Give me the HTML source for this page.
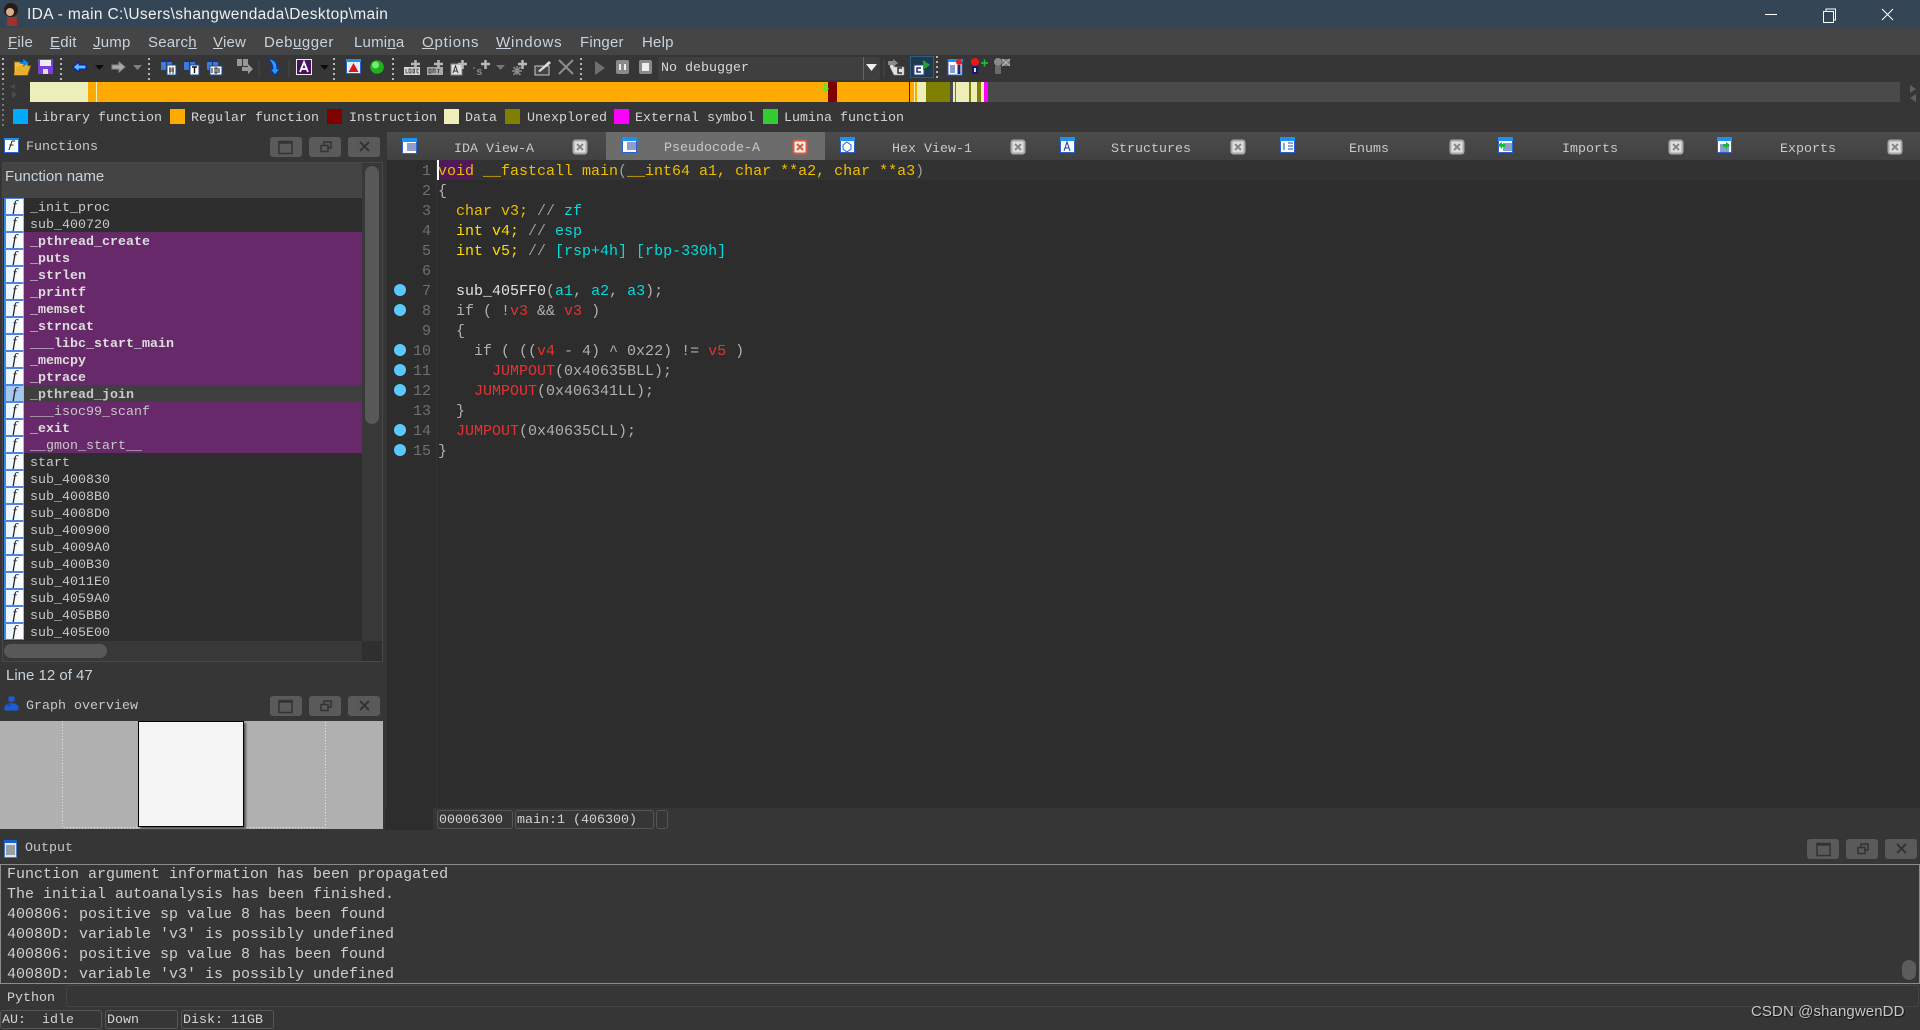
<!DOCTYPE html>
<html><head><meta charset="utf-8"><title>IDA - main</title>
<style>
html,body{margin:0;padding:0;width:1920px;height:1030px;overflow:hidden;background:#363636}
*{box-sizing:border-box}
.a{position:absolute}
.s{font-family:"Liberation Sans",sans-serif}
.m{font-family:"Liberation Mono",monospace;font-size:13.33px;white-space:pre;color:#d4d4d4}
.menu{position:absolute;top:30px;height:25px;font:15px/26px "Liberation Sans",sans-serif;color:#c9d3dc;white-space:pre;letter-spacing:.2px}
.lg{position:absolute;top:109px;width:15px;height:15px}
.lt{position:absolute;top:110px;line-height:17px}
.tabt{position:absolute;top:141px;line-height:18px;color:#c8c8c8}
.btn{position:absolute;width:32px;height:20px;background:#5a5a5a;border-radius:3px}
.row{position:absolute;left:4px;width:358px;height:17px;line-height:17px}
.fi{position:absolute;left:0;top:0;width:20px;height:17px;background:linear-gradient(90deg,#eaf5ff,#fff);border:1px solid #4d86e0;border-right:1px solid #9cc0ee;border-left:2px solid #3c86e8;color:#222;font:italic 16px/15px "Liberation Serif",serif;text-align:center;overflow:hidden}
.rt{position:absolute;left:26px;top:3px;font-family:"Liberation Mono",monospace;font-size:13.33px;white-space:pre;color:#c8c8c8;line-height:15px}
.b .rt{font-weight:bold;color:#dedede}
.pu{background:#67296a}
.c{position:absolute;left:438px;margin-top:1px;font:15px/20px "Liberation Mono",monospace;white-space:pre;color:#b0b0b0}
.n{position:absolute;left:395px;margin-top:1px;width:36px;text-align:right;font:15px/20px "Liberation Mono",monospace;color:#707070}
.k{color:#efbe00}.y{color:#ffdc00}.g{color:#9a9a9a}.t{color:#00dcdc}.r{color:#e63232}.w{color:#e2e2e2}
.o{position:absolute;left:7px;margin-top:1px;font:15px/20px "Liberation Mono",monospace;white-space:pre;color:#cfcfcf}
.box{position:absolute;border:1px solid #555;border-radius:3px;height:19px;top:810px;line-height:19px;padding-left:1px}
</style></head><body>

<!-- title -->
<div class="a" style="left:0;top:0;width:1920px;height:28px;background:#344655"></div>
<div class="a s" style="left:27px;top:4px;font-size:15.5px;line-height:21px;color:#f0f0f0;white-space:pre;letter-spacing:.35px">IDA - main C:\Users\shangwendada\Desktop\main</div>

<!-- menu -->
<div class="a" style="left:0;top:28px;width:1920px;height:27px;background:#454545"></div>
<div class="menu" style="left:8px"><u>F</u>ile</div>
<div class="menu" style="left:50px"><u>E</u>dit</div>
<div class="menu" style="left:93px"><u>J</u>ump</div>
<div class="menu" style="left:148px">Searc<u>h</u></div>
<div class="menu" style="left:213px"><u>V</u>iew</div>
<div class="menu" style="left:264px;letter-spacing:.5px">Deb<u>u</u>gger</div>
<div class="menu" style="left:354px">Lumi<u>n</u>a</div>
<div class="menu" style="left:422px;letter-spacing:.8px"><u>O</u>ptions</div>
<div class="menu" style="left:496px;letter-spacing:.8px"><u>W</u>indows</div>
<div class="menu" style="left:580px">Finger</div>
<div class="menu" style="left:642px">Help</div>

<!-- combobox -->
<div class="a" style="left:658px;top:57px;width:222px;height:23px;background:#3f3f3f;border-radius:3px"></div>
<div class="a" style="left:863px;top:57px;width:1px;height:23px;background:#666"></div>
<div class="a m" style="left:661px;top:59px;line-height:19px;color:#d8d8d8">No debugger</div>

<!-- navbar -->
<div class="a" style="left:30px;top:82px;width:1870px;height:20px;background:#4a4a4a"></div>
<div class="a" style="left:30px;top:82px;width:57px;height:20px;background:#eeeebb"></div>
<div class="a" style="left:87px;top:82px;width:901px;height:20px;background:#ffaa00"></div>
<div class="a" style="left:87px;top:82px;width:1px;height:20px;background:#eeeebb"></div>
<div class="a" style="left:96px;top:82px;width:1px;height:20px;background:#eeeebb"></div>
<div class="a" style="left:828px;top:82px;width:9px;height:20px;background:#800000"></div>
<div class="a" style="left:909px;top:82px;width:1px;height:20px;background:#800000"></div>
<div class="a" style="left:914px;top:82px;width:1px;height:20px;background:#eeeebb"></div>
<div class="a" style="left:917px;top:82px;width:9px;height:20px;background:#eeeebb"></div>
<div class="a" style="left:926px;top:82px;width:24px;height:20px;background:#808000"></div>
<div class="a" style="left:950px;top:82px;width:3px;height:20px;background:#4a4a4a"></div>
<div class="a" style="left:953px;top:82px;width:2px;height:20px;background:#eeeebb"></div>
<div class="a" style="left:955px;top:82px;width:1px;height:20px;background:#808000"></div>
<div class="a" style="left:956px;top:82px;width:13px;height:20px;background:#eeeebb"></div>
<div class="a" style="left:969px;top:82px;width:2px;height:20px;background:#808000"></div>
<div class="a" style="left:971px;top:82px;width:6px;height:20px;background:#eeeebb"></div>
<div class="a" style="left:977px;top:82px;width:4px;height:20px;background:#808000"></div>
<div class="a" style="left:981px;top:82px;width:3px;height:20px;background:#eeeebb"></div>
<div class="a" style="left:984px;top:82px;width:4px;height:20px;background:#ff00ff"></div>

<!-- legend -->
<div class="lg" style="left:13px;background:#00aaff"></div><div class="lt m" style="left:34px">Library function</div>
<div class="lg" style="left:170px;background:#ffaa00"></div><div class="lt m" style="left:191px">Regular function</div>
<div class="lg" style="left:327px;background:#800000"></div><div class="lt m" style="left:349px">Instruction</div>
<div class="lg" style="left:444px;background:#eeeebb"></div><div class="lt m" style="left:465px">Data</div>
<div class="lg" style="left:505px;background:#808000"></div><div class="lt m" style="left:527px">Unexplored</div>
<div class="lg" style="left:614px;background:#ff00ff"></div><div class="lt m" style="left:635px">External symbol</div>
<div class="lg" style="left:763px;background:#33cc33"></div><div class="lt m" style="left:784px">Lumina function</div>

<!-- tabs -->
<div class="a" style="left:387px;top:132px;width:1533px;height:28px;background:linear-gradient(#4c4c4c,#414141)"></div>
<div class="a" style="left:606px;top:132px;width:219px;height:28px;background:#6c6c6c"></div>
<div class="tabt m" style="left:454px">IDA View-A</div>
<div class="tabt m" style="left:664px;top:140px">Pseudocode-A</div>
<div class="tabt m" style="left:892px">Hex View-1</div>
<div class="tabt m" style="left:1111px">Structures</div>
<div class="tabt m" style="left:1349px">Enums</div>
<div class="tabt m" style="left:1562px">Imports</div>
<div class="tabt m" style="left:1780px">Exports</div>

<!-- editor -->
<div class="a" style="left:387px;top:160px;width:1533px;height:648px;background:#2d2d2d"></div>
<div class="a" style="left:385px;top:808px;width:48px;height:22px;background:#2d2d2d"></div>
<div class="a" style="left:437px;top:160px;width:1483px;height:20px;background:#323232"></div>
<div class="a" style="left:436px;top:160px;width:1px;height:670px;background:#343434"></div>
<div class="a" style="left:438px;top:160px;width:35px;height:20px;background:#4f1a55"></div>
<div class="a" style="left:437px;top:160px;width:2px;height:20px;background:#fff"></div>

<div class="n" style="top:161px">1</div><div class="n" style="top:181px">2</div><div class="n" style="top:201px">3</div><div class="n" style="top:221px">4</div><div class="n" style="top:241px">5</div><div class="n" style="top:261px">6</div><div class="n" style="top:281px">7</div><div class="n" style="top:301px">8</div><div class="n" style="top:321px">9</div><div class="n" style="top:341px">10</div><div class="n" style="top:361px">11</div><div class="n" style="top:381px">12</div><div class="n" style="top:401px">13</div><div class="n" style="top:421px">14</div><div class="n" style="top:441px">15</div>

<div class="c" style="top:161px"><span class="k">void __fastcall main</span><span style="color:#8aa">(</span><span class="k">__int64 a1, char **a2, char **a3</span><span class="g">)</span></div>
<div class="c" style="top:181px">{</div>
<div class="c" style="top:201px">  <span class="k">char v3;</span><span class="g"> // </span><span class="t">zf</span></div>
<div class="c" style="top:221px">  <span class="y">int v4;</span><span class="g"> // </span><span class="t">esp</span></div>
<div class="c" style="top:241px">  <span class="y">int v5;</span><span class="g"> // </span><span class="t">[rsp+4h] [rbp-330h]</span></div>
<div class="c" style="top:281px">  <span class="w">sub_405FF0</span>(<span class="t">a1</span>, <span class="t">a2</span>, <span class="t">a3</span>);</div>
<div class="c" style="top:301px">  if ( !<span class="r">v3</span> &amp;&amp; <span class="r">v3</span> )</div>
<div class="c" style="top:321px">  {</div>
<div class="c" style="top:341px">    if ( ((<span class="r">v4</span> - 4) ^ 0x22) != <span class="r">v5</span> )</div>
<div class="c" style="top:361px">      <span class="r">JUMPOUT</span>(0x40635BLL);</div>
<div class="c" style="top:381px">    <span class="r">JUMPOUT</span>(0x406341LL);</div>
<div class="c" style="top:401px">  }</div>
<div class="c" style="top:421px">  <span class="r">JUMPOUT</span>(0x40635CLL);</div>
<div class="c" style="top:441px">}</div>

<!-- editor status -->
<div class="box m" style="left:437px;width:76px">00006300</div>
<div class="box m" style="left:515px;width:139px">main:1 (406300)</div>
<div class="box m" style="left:656px;width:12px"></div>

<!-- functions panel -->
<div class="a m" style="left:26px;top:139px;line-height:18px;color:#c8c8c8">Functions</div>
<div class="a" style="left:2px;top:162px;width:381px;height:500px;border:1px solid #484848;background:#383838"></div>
<div class="a" style="left:3px;top:163px;width:359px;height:35px;background:#444"></div>
<div class="a s" style="left:5px;top:167px;font-size:15px;line-height:20px;color:#c9d3dc">Function name</div>
<div class="a" style="left:3px;top:198px;width:359px;height:443px;background:#2d2d2d"></div>
<div class="a" style="left:365px;top:166px;width:14px;height:258px;background:#585858;border-radius:7px"></div>
<div class="a" style="left:362px;top:641px;width:20px;height:20px;background:#2f2f2f"></div>
<div class="a" style="left:4px;top:644px;width:103px;height:14px;background:#585858;border-radius:7px"></div>

<div class="row" style="top:198px"><div class="fi">f</div><div class="rt">_init_proc</div></div>
<div class="row" style="top:215px"><div class="fi">f</div><div class="rt">sub_400720</div></div>
<div class="row b pu" style="top:232px"><div class="fi">f</div><div class="rt">_pthread_create</div></div>
<div class="row b pu" style="top:249px"><div class="fi">f</div><div class="rt">_puts</div></div>
<div class="row b pu" style="top:266px"><div class="fi">f</div><div class="rt">_strlen</div></div>
<div class="row b pu" style="top:283px"><div class="fi">f</div><div class="rt">_printf</div></div>
<div class="row b pu" style="top:300px"><div class="fi">f</div><div class="rt">_memset</div></div>
<div class="row b pu" style="top:317px"><div class="fi">f</div><div class="rt">_strncat</div></div>
<div class="row b pu" style="top:334px"><div class="fi">f</div><div class="rt">___libc_start_main</div></div>
<div class="row b pu" style="top:351px"><div class="fi">f</div><div class="rt">_memcpy</div></div>
<div class="row b pu" style="top:368px"><div class="fi">f</div><div class="rt">_ptrace</div></div>
<div class="row" style="top:385px;background:#3f3f3f"><div class="fi" style="background:#a4c8ee">f</div><div class="rt" style="font-weight:bold">_pthread_join</div></div>
<div class="row pu" style="top:402px"><div class="fi">f</div><div class="rt">___isoc99_scanf</div></div>
<div class="row b pu" style="top:419px"><div class="fi">f</div><div class="rt">_exit</div></div>
<div class="row pu" style="top:436px"><div class="fi">f</div><div class="rt">__gmon_start__</div></div>
<div class="row" style="top:453px"><div class="fi">f</div><div class="rt">start</div></div>
<div class="row" style="top:470px"><div class="fi">f</div><div class="rt">sub_400830</div></div>
<div class="row" style="top:487px"><div class="fi">f</div><div class="rt">sub_4008B0</div></div>
<div class="row" style="top:504px"><div class="fi">f</div><div class="rt">sub_4008D0</div></div>
<div class="row" style="top:521px"><div class="fi">f</div><div class="rt">sub_400900</div></div>
<div class="row" style="top:538px"><div class="fi">f</div><div class="rt">sub_4009A0</div></div>
<div class="row" style="top:555px"><div class="fi">f</div><div class="rt">sub_400B30</div></div>
<div class="row" style="top:572px"><div class="fi">f</div><div class="rt">sub_4011E0</div></div>
<div class="row" style="top:589px"><div class="fi">f</div><div class="rt">sub_4059A0</div></div>
<div class="row" style="top:606px"><div class="fi">f</div><div class="rt">sub_405BB0</div></div>
<div class="row" style="top:623px"><div class="fi">f</div><div class="rt">sub_405E00</div></div>

<div class="a s" style="left:6px;top:666px;font-size:15px;line-height:20px;color:#c9d3dc">Line 12 of 47</div>
<div class="a m" style="left:26px;top:698px;line-height:18px;color:#c8c8c8">Graph overview</div>

<!-- overview -->
<div class="a" style="left:0;top:721px;width:383px;height:108px;background:#b0b0b0"></div>
<svg class="a" style="left:0;top:721px" width="383" height="108" fill="none"><path d="M62.500 0V106.500H325.500V0" stroke="#e6e6e6" stroke-dasharray="1 2"/></svg>
<div class="a" style="left:138px;top:721px;width:106px;height:106px;background:#f5f5f5;border:1px solid #000;box-shadow:2px 2px 2px #555"></div>

<!-- panel buttons -->
<div class="btn" style="left:270px;top:137px"></div><div class="btn" style="left:309px;top:137px"></div><div class="btn" style="left:348px;top:137px"></div>
<div class="btn" style="left:270px;top:696px"></div><div class="btn" style="left:309px;top:696px"></div><div class="btn" style="left:348px;top:696px"></div>
<div class="btn" style="left:1807px;top:839px"></div><div class="btn" style="left:1846px;top:839px"></div><div class="btn" style="left:1885px;top:839px"></div>

<!-- output -->
<div class="a m" style="left:25px;top:840px;line-height:18px;color:#c8c8c8">Output</div>
<div class="a" style="left:0;top:864px;width:1920px;height:120px;border:1px solid #8a8a90;background:#363636"></div>
<div class="o" style="top:864px">Function argument information has been propagated</div>
<div class="o" style="top:884px">The initial autoanalysis has been finished.</div>
<div class="o" style="top:904px">400806: positive sp value 8 has been found</div>
<div class="o" style="top:924px">40080D: variable 'v3' is possibly undefined</div>
<div class="o" style="top:944px">400806: positive sp value 8 has been found</div>
<div class="o" style="top:964px">40080D: variable 'v3' is possibly undefined</div>
<div class="a" style="left:1902px;top:960px;width:14px;height:20px;background:#5c5c5c;border-radius:7px"></div>

<!-- python -->
<div class="a m" style="left:7px;top:990px;line-height:18px">Python</div>
<div class="a" style="left:66px;top:985px;width:1853px;height:22px;border:1px solid #444;border-radius:3px"></div>

<!-- status -->
<div class="box m" style="left:0;top:1010px;width:102px;height:19px">AU:  idle</div>
<div class="box m" style="left:105px;top:1010px;width:73px;height:19px">Down</div>
<div class="box m" style="left:181px;top:1010px;width:93px;height:19px">Disk: 11GB</div>
<div class="a s" style="left:1751px;top:1002px;font-size:15px;line-height:19px;color:#c8c8c8;text-shadow:1px 1px 1px #111;letter-spacing:.1px">CSDN @shangwenDD</div>

<!-- icon overlay -->
<svg class="a" style="left:0;top:0" width="1920" height="1030" viewBox="0 0 1920 1030" fill="none">
<defs>
<g id="win"><rect x=".5" y=".5" width="14" height="15" fill="#fff" stroke="#2a62d0"/><rect x="0" y="0" width="15" height="4" fill="#1e90f0"/></g>
<g id="lines"><path d="M5 6h9M5 8h9M5 10h9M5 12h9" stroke="#1c3d98"/></g>
<g id="bino"><rect x="0" y="3" width="5" height="8" rx="1" fill="#3c7ce0"/><rect x="6" y="3" width="5" height="8" rx="1" fill="#3c7ce0"/><rect x="1" y="0" width="3" height="3" fill="#162f80"/><rect x="7" y="0" width="3" height="3" fill="#162f80"/></g>
<g id="plus"><path d="M0 4h9M4.500 0v9" stroke="#b8b8b8" stroke-width="2.500"/></g>
</defs>

<!-- title logo -->
<circle cx="11" cy="10" r="7" fill="#2a1a14"/><circle cx="10" cy="12" r="4" fill="#d8b090"/><rect x="7" y="17" width="10" height="9" fill="#a0302a"/>
<!-- window buttons -->
<path d="M1765 14.500h12" stroke="#fff"/>
<rect x="1823.500" y="11.500" width="10" height="11" stroke="#fff"/><path d="M1826 11.500v-2.500h9.500v11h-2" stroke="#fff"/>
<path d="M1882 9l11 11M1893 9l-11 11" stroke="#fff"/>

<!-- grips -->
<g stroke="#b4b4b4" stroke-width="2" stroke-dasharray="2 3">
<path d="M3 58v22M61 58v22M149 58v22M334 58v22M393 58v22M581 58v22M937 56v22"/>
</g>
<path d="M3 83v20M3 104v22" stroke="#777" stroke-width="2" stroke-dasharray="2 3"/>
<path d="M259 60v18M289 60v18M884 60v18" stroke="#484848"/>

<!-- folder -->
<path d="M14.500 62v13h13l3-9h-3v-3h-7l-1-1z" fill="#f1c24a" stroke="#9a7618"/><path d="M17 66h13l-3 9H14z" fill="#e8b030"/><path d="M20 63h6M23 60l4 3-4 3" stroke="#0a8cf0" stroke-width="2"/>
<!-- save -->
<rect x="38" y="59" width="15" height="15" fill="#7a3fd8"/><rect x="40" y="60" width="11" height="6" fill="#eee"/><rect x="43" y="69" width="5" height="5" fill="#dedede"/>
<!-- back / fwd -->
<path d="M73 67l6-5v3h7v4h-7v3z" fill="#58c0ff" stroke="#0018c8"/>
<path d="M95 65h9l-4.500 5z" fill="#0c0c0c"/>
<path d="M125 67l-6-5v3h-7v4h7v3z" fill="#aaa" stroke="#888"/>
<path d="M133 65h9l-4.500 5z" fill="#808080"/>
<!-- binoculars -->
<use href="#bino" x="161" y="59"/><rect x="167" y="65" width="9" height="10" fill="#fff" stroke="#1c4a90"/><path d="M169 69h5M169 71h5M170 67v7M173 67v7" stroke="#111" stroke-width=".8"/>
<use href="#bino" x="184" y="59"/><rect x="190" y="65" width="9" height="10" fill="#fff" stroke="#1c4a90"/><path d="M192 67h5M194.500 67v6" stroke="#111" stroke-width="1.400"/>
<use href="#bino" x="207" y="59"/><rect x="210" y="66" width="12" height="9" fill="#fff" stroke="#1c4a90"/><path d="M212 68v5M215 68h2v5h-2zM219 68v5" stroke="#111"/>
<!-- search next gray -->
<rect x="237" y="59" width="5" height="7" fill="#989898"/><rect x="243" y="59" width="5" height="7" fill="#989898"/><path d="M242 67h6v-3l5 5-5 5v-3h-6z" fill="#9a9a9a"/>
<!-- blue down arrow -->
<path d="M268 59c8 0 9 5 9 10h3l-5 6-5-6h3c0-4-1-7-5-10z" fill="#2a9cf0" stroke="#0830b8"/>
<!-- A box -->
<rect x="296.500" y="59.500" width="15" height="15" fill="#4a1060" stroke="#eee"/><path d="M300 72l4-10 4 10M301.500 69h5" stroke="#fff" stroke-width="1.800"/>
<path d="M320 65h9l-4.500 5z" fill="#0c0c0c"/>
<!-- warn -->
<rect x="346.500" y="59.500" width="14" height="14" fill="#e8f0fa" stroke="#2a62d0"/><rect x="346" y="59" width="15" height="3" fill="#1e90f0"/><path d="M353.500 63l5 9h-10z" fill="#d81818"/>
<!-- green ball -->
<circle cx="377" cy="67" r="6.800" fill="#22b022"/><circle cx="375.500" cy="65" r="3.500" fill="#70f070"/>
<!-- code/data -->
<rect x="404" y="67" width="16" height="8" fill="#d8d8d8"/><path d="M406 69v4h2M409 69h2v4h-2zM413 69v4h1.500v-4zM417 69h2M417 73h2M417 69v4" stroke="#333" stroke-width=".8"/><use href="#plus" x="411" y="60"/>
<rect x="427" y="67" width="16" height="8" fill="#a8a8a8"/><path d="M429 69v4h2v-4zM433 73v-4h2v4M437 69h3M438.500 69v4" stroke="#333" stroke-width=".8"/><use href="#plus" x="434" y="60"/>
<rect x="451" y="64" width="11" height="11" fill="#e0e0e0" stroke="#888"/><path d="M453 73l2.500-7 2.500 7M454 71h3" stroke="#333"/><use href="#plus" x="458" y="60"/>
<path d="M474 67v2M486 67v2" stroke="#888"/><text x="476" y="75" font-family="Liberation Mono" font-size="11" font-weight="bold" fill="#888">s</text><use href="#plus" x="481" y="60"/>
<path d="M496 65h9l-4.500 5z" fill="#777"/>
<path d="M512 71h10M517 66v9M513.500 67l7 8M520.500 67l-7 8" stroke="#8c8c8c" stroke-width="1.500"/><use href="#plus" x="518" y="60"/>
<path d="M535 66h14v9h-14z" fill="#444" stroke="#cacaca"/><path d="M538 71l11-10 2 2-11 9z" fill="#ddd"/>
<path d="M559 60l14 14M573 60l-14 14" stroke="#8e8e8e" stroke-width="2"/>
<!-- debug -->
<path d="M595 61l10 7-10 7z" fill="#707070"/>
<rect x="616" y="60" width="13" height="14" rx="2" fill="#8a8a8a"/><path d="M620 64v6M625 64v6" stroke="#eee" stroke-width="2"/>
<rect x="639" y="60" width="13" height="14" rx="2" fill="#8a8a8a"/><rect x="642" y="63" width="7" height="8" fill="#eee"/>
<path d="M866 64h11l-5.500 7z" fill="#eee"/>
<!-- after combobox -->
<path d="M890 62l5 5 9-0v8h-10l-4-8z" fill="#e0e0e0" stroke="#999" stroke-width=".5"/><path d="M888 61h5v-2l5 4-5 4v-2h-5z" fill="#8c8c8c"/><path d="M902 68h-4v5h4" stroke="#333" stroke-width="1.500"/>
<rect x="910.500" y="56.500" width="23" height="21" fill="#1f3a50" stroke="#2c5c80"/><rect x="914" y="65" width="10" height="10" fill="#fff" stroke="#24408c"/><path d="M921 68h-4v4h4" stroke="#182c7a" stroke-width="1.500"/><path d="M923 60l7 5-7 5z" fill="#22a038"/>
<rect x="948" y="60" width="14" height="15" fill="#fff" stroke="#2a62d0"/><rect x="948" y="59" width="15" height="3" fill="#1e90f0"/><path d="M950 66h5M950 68h5M950 70h5M950 72h5" stroke="#1c3d98"/><circle cx="959" cy="62" r="3" fill="#e02020"/><rect x="957.500" y="65" width="3" height="9" fill="#1c2a7a"/>
<circle cx="975" cy="62" r="4" fill="#e81818"/><rect x="972" y="66" width="6" height="8" fill="#101a70"/><rect x="974" y="68" width="2" height="4" fill="#ddd"/><path d="M981 63h7M984.500 59.500v7" stroke="#18c838" stroke-width="1.500"/>
<circle cx="998" cy="62" r="4" fill="#8a8a8a"/><rect x="995" y="66" width="6" height="8" fill="#6a6a6a"/><path d="M1002 59h8v7h-8z" fill="#7c7c7c"/><path d="M1002 59l8 7M1010 59l-8 7" stroke="#bbb"/>
<path d="M15 84v5l-5-2.500zM12 91v7l5-3.500z" fill="#4c4c4c"/>
<path d="M1910 85v8l6-4zM1916 94v8l-6-4z" fill="#606060"/>
<!-- nav arrow -->
<path d="M824 83h3v5h2l-3.500 5-3.500-5h2z" fill="#70e020"/>

<!-- tab icons -->
<use href="#win" x="402" y="138"/><use href="#lines" x="402" y="138"/>
<use href="#win" x="622" y="137"/><use href="#lines" x="622" y="137"/>
<use href="#win" x="840" y="137"/><path d="M843 145l4-3 4 3v4l-4 3-4-3z" stroke="#2a62d0"/>
<use href="#win" x="1060" y="137"/><path d="M1064 151l3-9 3 9M1065 148h4" stroke="#1c3d98"/>
<use href="#win" x="1280" y="137"/><path d="M1284 143v7M1288 143h5M1288 146h5M1288 149h5" stroke="#0a4cc0"/>
<use href="#win" x="1498" y="137"/><use href="#lines" x="1498" y="138"/><path d="M1498 145l4-3v2h3v3h-3v2z" fill="#18b838"/>
<use href="#win" x="1717" y="137"/><use href="#lines" x="1715" y="139"/><path d="M1730 145l-4-3v2h-3v3h3v2z" fill="#18b838"/>

<!-- tab closes -->
<g>
<rect x="573.500" y="140.500" width="13" height="13" rx="2" fill="#e0e0e0" stroke="#a8a8a8" stroke-width="2"/><path d="M577 144l6 6M583 144l-6 6" stroke="#888" stroke-width="2"/>
<rect x="793.500" y="140.500" width="13" height="13" rx="2" fill="#f0f0f0" stroke="#e0583c" stroke-width="2"/><path d="M797 144l6 6M803 144l-6 6" stroke="#e0583c" stroke-width="2"/>
<rect x="1011.500" y="140.500" width="13" height="13" rx="2" fill="#e0e0e0" stroke="#a8a8a8" stroke-width="2"/><path d="M1015 144l6 6M1021 144l-6 6" stroke="#888" stroke-width="2"/>
<rect x="1231.500" y="140.500" width="13" height="13" rx="2" fill="#e0e0e0" stroke="#a8a8a8" stroke-width="2"/><path d="M1235 144l6 6M1241 144l-6 6" stroke="#888" stroke-width="2"/>
<rect x="1450.500" y="140.500" width="13" height="13" rx="2" fill="#e0e0e0" stroke="#a8a8a8" stroke-width="2"/><path d="M1454 144l6 6M1460 144l-6 6" stroke="#888" stroke-width="2"/>
<rect x="1669.500" y="140.500" width="13" height="13" rx="2" fill="#e0e0e0" stroke="#a8a8a8" stroke-width="2"/><path d="M1673 144l6 6M1679 144l-6 6" stroke="#888" stroke-width="2"/>
<rect x="1888.500" y="140.500" width="13" height="13" rx="2" fill="#e0e0e0" stroke="#a8a8a8" stroke-width="2"/><path d="M1892 144l6 6M1898 144l-6 6" stroke="#888" stroke-width="2"/>
</g>

<!-- panel icons -->
<rect x="4.500" y="138.500" width="14" height="14" fill="#fff" stroke="#2a62d0"/><rect x="4" y="138" width="15" height="2" fill="#1e90f0"/><path d="M9 150l3-9h3M9.500 145h4" stroke="#222"/>
<path d="M9 697h5v4H9zM5 706h5v4H5zM9.500 706h4v4h-4zM14 706h4v4h-4zM11.500 701v5M7 704h9v2M7 704v2" fill="#1c5cd8" stroke="#1c5cd8"/>
<rect x="4.500" y="840.500" width="12" height="17" fill="#dde8f8" stroke="#4a7ac8"/><rect x="4" y="840" width="13" height="3" fill="#1860d0"/><path d="M6 846h9M6 848h9M6 850h9M6 852h9M6 854h9" stroke="#555"/>

<!-- panel button glyphs -->
<path d="M279 141.500h13v12h-13zM279 143h13" stroke="#333" stroke-width="1.500"/>
<path d="M321 145.500h7v6h-7zM324 145v-3h7v6h-3" stroke="#333" stroke-width="1.500"/>
<path d="M360 142l9 9M369 142l-9 9" stroke="#333" stroke-width="2"/>
<path d="M279 700.500h13v12h-13zM279 702h13" stroke="#333" stroke-width="1.500"/>
<path d="M321 704.500h7v6h-7zM324 704v-3h7v6h-3" stroke="#333" stroke-width="1.500"/>
<path d="M360 701l9 9M369 701l-9 9" stroke="#333" stroke-width="2"/>
<path d="M1817 843.500h13v12h-13zM1817 845h13" stroke="#333" stroke-width="1.500"/>
<path d="M1858 847.500h7v6h-7zM1861 847v-3h7v6h-3" stroke="#333" stroke-width="1.500"/>
<path d="M1897 844l9 9M1906 844l-9 9" stroke="#333" stroke-width="2"/>

<!-- breakpoint dots -->
<g fill="#5ac8ff"><circle cx="400" cy="290" r="6"/><circle cx="400" cy="310" r="6"/><circle cx="400" cy="350" r="6"/><circle cx="400" cy="370" r="6"/><circle cx="400" cy="390" r="6"/><circle cx="400" cy="430" r="6"/><circle cx="400" cy="450" r="6"/></g>
</svg>
</body></html>
